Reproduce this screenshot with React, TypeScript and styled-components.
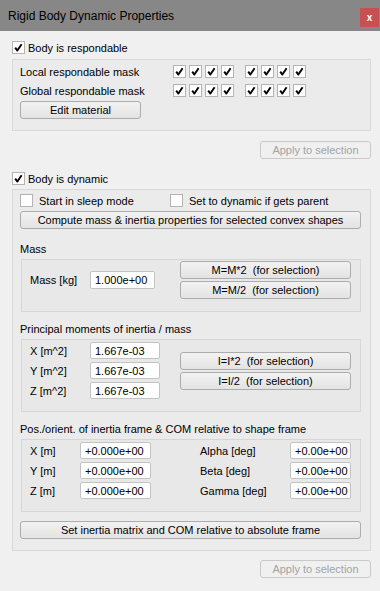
import React from 'react';
import styled, { createGlobalStyle } from 'styled-components';

const GlobalStyle = createGlobalStyle`
  html, body {
    margin: 0;
    padding: 0;
    background: #f0f0f0;
  }
  body {
    font-family: "Liberation Sans", Arial, sans-serif;
    font-size: 11px;
    color: #000;
  }
`;

const Window = styled.div`
  width: 380px;
  height: 591px;
  background: #f0f0f0;
  display: flex;
  flex-direction: column;
  overflow: hidden;
`;

const TitleBar = styled.div`
  height: 31px;
  background: #878787;
  display: flex;
  justify-content: space-between;
  align-items: flex-start;
  flex-shrink: 0;
`;

const Title = styled.span`
  font-size: 12px;
  color: #000;
  padding: 9px 0 0 8px;
`;

const CloseButton = styled.div`
  width: 19px;
  height: 19px;
  margin: 8px 1px 0 0;
  background: #c75050;
  color: #fff;
  font-weight: bold;
  font-size: 10px;
  display: flex;
  align-items: center;
  justify-content: center;
`;

const Content = styled.div`
  display: flex;
  flex-direction: column;
  padding: 0 9px 0 12px;
`;

const CheckRow = styled.label<{ $mt?: number }>`
  display: flex;
  align-items: center;
  gap: 3px;
  height: 13px;
  margin-top: ${p => p.$mt ?? 0}px;
  white-space: nowrap;
`;

const Box = styled.span`
  width: 11px;
  height: 11px;
  border: 1px solid #b4b4b4;
  background: #fff;
  display: inline-flex;
  align-items: center;
  justify-content: center;
  flex-shrink: 0;
`;

const Check = ({ checked = true }: { checked?: boolean }) => (
    <Box>
        {checked && (
            <svg width="9" height="9" viewBox="0 0 9 9">
                <path d="M1.2 4.6 L3.4 7.6 L7.6 1.2" fill="none" stroke="#000" strokeWidth="1.9" strokeLinejoin="round" />
            </svg>
        )}
    </Box>
);

const Group = styled.div<{ $mt?: number; $pt?: number; $pb?: number; $pl?: number; $pr?: number }>`
  border: 1px solid #d9d9d9;
  background: #ebebeb;
  margin-top: ${p => p.$mt ?? 0}px;
  padding: ${p => p.$pt ?? 0}px ${p => p.$pr ?? 0}px ${p => p.$pb ?? 0}px ${p => p.$pl ?? 0}px;
  display: flex;
  flex-direction: column;
`;

const InnerGroup = styled(Group)`
  margin-left: 1px;
  background: #e8e8e8;
  border-color: #d6d6d6;
`;

const MaskRow = styled.div<{ $mt?: number }>`
  display: flex;
  align-items: center;
  height: 13px;
  margin-top: ${p => p.$mt ?? 0}px;
`;

const MaskLabel = styled.span`
  width: 153px;
`;

const MaskBits = styled.div`
  display: flex;
  gap: 3px;
  & + & {
    margin-left: 11px;
  }
`;

const Button = styled.button<{ $w?: number; $h?: number; $mt?: number; $disabled?: boolean }>`
  width: ${p => (p.$w ? `${p.$w}px` : '100%')};
  height: ${p => p.$h ?? 18}px;
  margin-top: ${p => p.$mt ?? 0}px;
  padding: 0;
  font-family: inherit;
  font-size: 11px;
  color: ${p => (p.$disabled ? '#a3a3a3' : '#000')};
  border: 1px solid ${p => (p.$disabled ? '#c9c9c9' : '#acacac')};
  border-radius: 3px;
  background: ${p => (p.$disabled ? '#f0f0f0' : 'linear-gradient(#f2f2f2, #e3e3e3)')};
  white-space: pre;
  flex-shrink: 0;
`;

const RightRow = styled.div<{ $mt: number }>`
  display: flex;
  justify-content: flex-end;
  margin-top: ${p => p.$mt}px;
`;

const Caption = styled.div<{ $mt: number }>`
  height: 14px;
  line-height: 14px;
  margin-top: ${p => p.$mt}px;
`;

const OptionsRow = styled.div`
  display: grid;
  grid-template-columns: 150px auto;
  height: 13px;
`;

const Field = styled.div<{ $w: number; $h?: number }>`
  width: ${p => p.$w}px;
  height: ${p => p.$h ?? 17}px;
  box-sizing: border-box;
  background: #fff;
  border: 1px solid #c3c3c3;
  border-radius: 2px;
  padding-left: 4px;
  display: flex;
  align-items: center;
  white-space: nowrap;
  overflow: hidden;
`;

const SplitRow = styled.div`
  display: flex;
  align-items: center;
`;

const FieldLabel = styled.span<{ $w: number }>`
  width: ${p => p.$w}px;
  flex-shrink: 0;
`;

const ButtonStack = styled.div`
  display: flex;
  flex-direction: column;
  gap: 2px;
  margin-left: auto;
`;

const FieldStack = styled.div`
  display: flex;
  flex-direction: column;
  gap: 3px;
`;

const PosGrid = styled.div`
  display: grid;
  grid-template-columns: 50px 71px 49px 90px 61px;
  grid-auto-rows: 17px;
  row-gap: 3px;
  align-items: center;
`;

const OptionText = styled.span`
  padding-left: 3px;
`;

const bits = [0, 1, 2, 3];

const MaskChecks = () => (
    <>
        <MaskBits>{bits.map(i => <Check key={i} />)}</MaskBits>
        <MaskBits>{bits.map(i => <Check key={i} />)}</MaskBits>
    </>
);

const inertia = [
    ['X [m^2]', '1.667e-03'],
    ['Y [m^2]', '1.667e-03'],
    ['Z [m^2]', '1.667e-03'],
];

const pose = [
    ['X [m]', '+0.000e+00', 'Alpha [deg]', '+0.00e+00'],
    ['Y [m]', '+0.000e+00', 'Beta [deg]', '+0.00e+00'],
    ['Z [m]', '+0.000e+00', 'Gamma [deg]', '+0.00e+00'],
];

const App = () => {
    return (
        <Window>
            <GlobalStyle />
            <TitleBar>
                <Title>Rigid Body Dynamic Properties</Title>
                <CloseButton>x</CloseButton>
            </TitleBar>
            <Content>
                <CheckRow $mt={10}><Check /> Body is respondable</CheckRow>
                <Group $mt={5} $pt={5} $pb={11} $pl={7} $pr={9}>
                    <MaskRow>
                        <MaskLabel>Local respondable mask</MaskLabel>
                        <MaskChecks />
                    </MaskRow>
                    <MaskRow $mt={6}>
                        <MaskLabel>Global respondable mask</MaskLabel>
                        <MaskChecks />
                    </MaskRow>
                    <Button $w={121} $mt={4}>Edit material</Button>
                </Group>
                <RightRow $mt={10}>
                    <Button $w={111} $disabled>Apply to selection</Button>
                </RightRow>

                <CheckRow $mt={13}><Check /> Body is dynamic</CheckRow>
                <Group $mt={4} $pt={4} $pb={11} $pl={7} $pr={9}>
                    <OptionsRow>
                        <CheckRow><Check checked={false} /><OptionText>Start in sleep mode</OptionText></CheckRow>
                        <CheckRow><Check checked={false} /><OptionText>Set to dynamic if gets parent</OptionText></CheckRow>
                    </OptionsRow>
                    <Button $mt={4}>Compute mass &amp; inertia properties for selected convex shapes</Button>

                    <Caption $mt={13}>Mass</Caption>
                    <InnerGroup $mt={3} $pt={1} $pb={12} $pl={8} $pr={9}>
                        <SplitRow>
                            <FieldLabel $w={60}>Mass [kg]</FieldLabel>
                            <Field $w={65} $h={18}>1.000e+00</Field>
                            <ButtonStack>
                                <Button $w={171}>M=M*2  (for selection)</Button>
                                <Button $w={171}>M=M/2  (for selection)</Button>
                            </ButtonStack>
                        </SplitRow>
                    </InnerGroup>

                    <Caption $mt={10}>Principal moments of inertia / mass</Caption>
                    <InnerGroup $mt={3} $pt={2} $pb={12} $pl={8} $pr={9}>
                        <SplitRow>
                            <FieldStack>
                                {inertia.map(([label, value]) => (
                                    <SplitRow key={label}>
                                        <FieldLabel $w={60}>{label}</FieldLabel>
                                        <Field $w={70}>{value}</Field>
                                    </SplitRow>
                                ))}
                            </FieldStack>
                            <ButtonStack>
                                <Button $w={171}>I=I*2  (for selection)</Button>
                                <Button $w={171}>I=I/2  (for selection)</Button>
                            </ButtonStack>
                        </SplitRow>
                    </InnerGroup>

                    <Caption $mt={10}>Pos./orient. of inertia frame &amp; COM relative to shape frame</Caption>
                    <InnerGroup $mt={3} $pt={2} $pb={12} $pl={8} $pr={9}>
                        <PosGrid>
                            {pose.map(([l1, v1, l2, v2]) => (
                                <React.Fragment key={l1}>
                                    <span>{l1}</span>
                                    <Field $w={71}>{v1}</Field>
                                    <span />
                                    <span>{l2}</span>
                                    <Field $w={61}>{v2}</Field>
                                </React.Fragment>
                            ))}
                        </PosGrid>
                    </InnerGroup>
                    <Button $mt={9}>Set inertia matrix and COM relative to absolute frame</Button>
                </Group>
                <RightRow $mt={9}>
                    <Button $w={111} $disabled>Apply to selection</Button>
                </RightRow>
            </Content>
        </Window>
    );
};

export default App;
